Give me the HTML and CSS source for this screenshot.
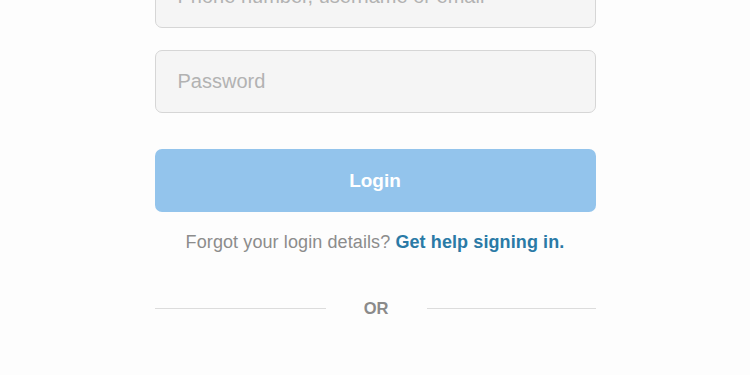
FILE: index.html
```html
<!DOCTYPE html>
<html lang="en">
<head>
<meta charset="utf-8">
<title>Login</title>
<link rel="stylesheet" href="styles.css">
</head>
<body>
<main class="login">
  <div class="field"><span class="placeholder">Phone number, username or email</span></div>
  <div class="field field-second"><span class="placeholder">Password</span></div>
  <button class="btn-login" type="button">Login</button>
  <p class="help">Forgot your login details? <a class="help-link" href="#">Get help signing in.</a></p>
  <div class="divider"><span class="line"></span><span class="or">OR</span><span class="line"></span></div>
</main>
</body>
</html>
```
FILE: styles.css
```css
html, body {
  margin: 0;
  padding: 0;
  background: #fdfdfd;
  overflow: hidden;
}
body {
  font-family: "Liberation Sans", Arial, sans-serif;
}
.login {
  width: 441px;
  margin: -35px auto 0;
  display: flex;
  flex-direction: column;
}
.field {
  box-sizing: border-box;
  height: 63px;
  background: #f5f5f5;
  border: 1px solid #d6d6d6;
  border-radius: 7px;
  display: flex;
  align-items: center;
  padding-left: 22px;
}
.field-second {
  margin-top: 22px;
}
.placeholder {
  font-size: 20px;
  color: #b2b2b2;
}
.btn-login {
  margin-top: 36px;
  height: 63px;
  border: none;
  border-radius: 7px;
  background: #93c4ec;
  color: #fff;
  font-family: inherit;
  font-size: 19px;
  font-weight: bold;
}
.help {
  margin: 20px 0 0;
  text-align: center;
  font-size: 18px;
  letter-spacing: 0.1px;
  color: #8c8c8c;
  line-height: 20px;
}
.help-link {
  color: #2a7aa6;
  font-weight: bold;
  text-decoration: none;
}
.divider {
  margin-top: 47px;
  display: flex;
  align-items: center;
}
.line {
  height: 1px;
  background: #dcdcdc;
}
.line:first-child {
  width: 171px;
}
.line:last-child {
  width: 169px;
  margin-left: auto;
}
.or {
  flex: 1;
  text-align: center;
  font-size: 16.5px;
  font-weight: bold;
  color: #8a8a8a;
}
```
